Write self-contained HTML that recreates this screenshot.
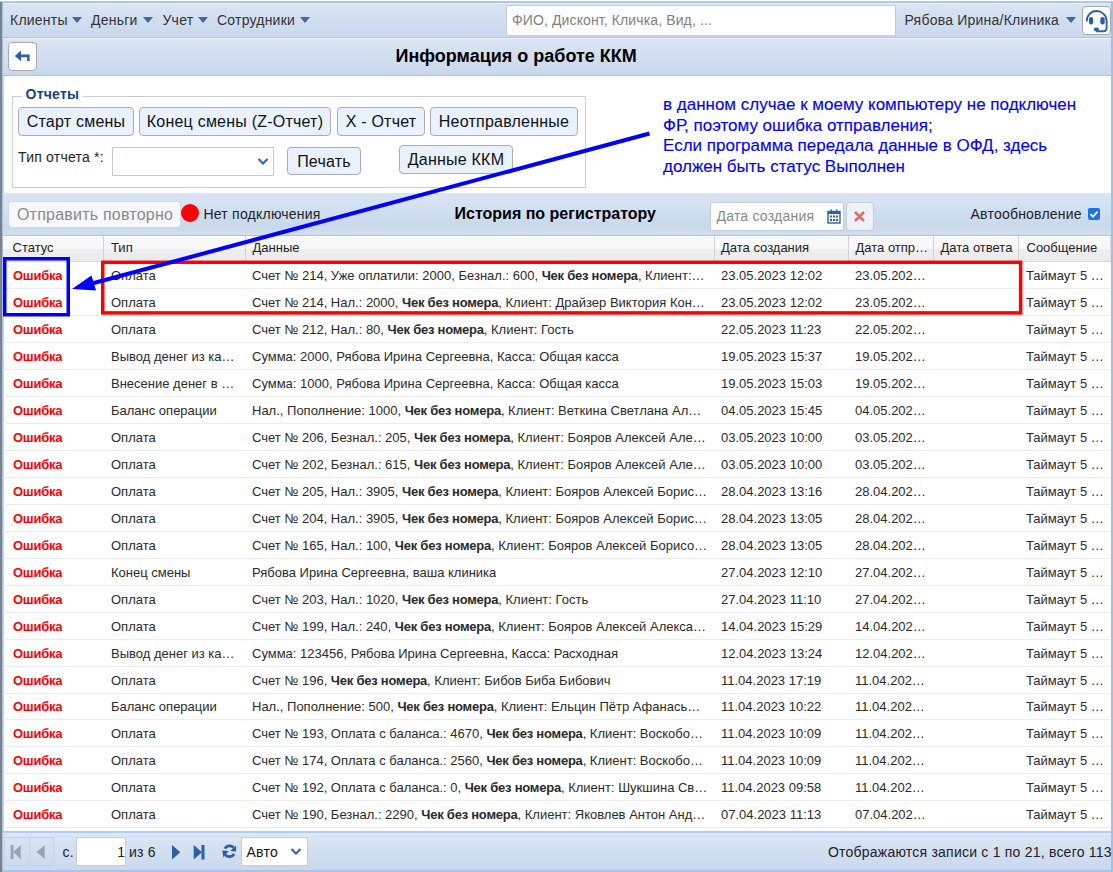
<!DOCTYPE html>
<html><head><meta charset="utf-8">
<style>
html,body{margin:0;padding:0;}
body{width:1113px;height:872px;position:relative;overflow:hidden;background:#fff;font-family:"Liberation Sans",sans-serif;color:#000;}
.a{position:absolute;white-space:nowrap;}
.bar{position:absolute;left:3px;right:2px;background:linear-gradient(#ebf1f9 0,#ebf1f9 1px,#dae5f3 1.5px,#c8d8ec 100%);}
.btn{position:absolute;box-sizing:border-box;letter-spacing:0.22px;border:1px solid #a9adb3;border-radius:4px;background:#e8f1fc;font-size:16px;text-align:center;color:#111;}
.tri{position:absolute;width:0;height:0;border-left:5.5px solid transparent;border-right:5.5px solid transparent;border-top:6px solid #3a68a8;}
.hd{position:absolute;top:235px;height:25px;line-height:25px;font-size:13px;color:#222;}
.row{position:absolute;left:3px;width:1107px;height:26px;border-bottom:1px solid #ececec;font-size:13px;color:#2a2a2a;}
.row span{position:absolute;top:0;line-height:27px;white-space:nowrap;overflow:hidden;}
.st{left:10px;color:#ff0000;font-weight:bold;letter-spacing:-0.25px;}
.row b{letter-spacing:-0.23px;}
.tp{left:108px;}
.dt{left:249px;}
.d1{left:718px;}
.d2{left:852px;}
.ms{left:1023px;}
</style></head><body>
<!-- frame -->
<div class="a" style="left:0;top:2px;width:2px;height:870px;background:#7d8188"></div>
<div class="a" style="left:0;top:1px;width:1113px;height:1px;background:#c4ccd8"></div>
<div class="a" style="left:2px;top:2px;width:1px;height:870px;background:#a0c0ea"></div><div class="a" style="left:3px;top:76px;width:1px;height:796px;background:#c4d8f2"></div>
<div class="a" style="left:1111px;top:2px;width:2px;height:870px;background:#a0c0ea"></div>

<!-- top bar -->
<div class="bar" style="top:2px;height:34px;border-top:1px solid #a6c4ec;border-bottom:1px solid #a6c4ec;"></div>
<div class="a" style="left:10px;top:3px;line-height:34px;font-size:14px;letter-spacing:0.22px;color:#333">Клиенты</div>
<div class="tri" style="left:71.5px;top:17px"></div>
<div class="a" style="left:91px;top:3px;line-height:34px;font-size:14px;letter-spacing:0.22px;color:#333">Деньги</div>
<div class="tri" style="left:143px;top:17px"></div>
<div class="a" style="left:162.5px;top:3px;line-height:34px;font-size:14px;letter-spacing:0.22px;color:#333">Учет</div>
<div class="tri" style="left:197.5px;top:17px"></div>
<div class="a" style="left:217px;top:3px;line-height:34px;font-size:14px;letter-spacing:0.22px;color:#333">Сотрудники</div>
<div class="tri" style="left:299.5px;top:17px"></div>

<div class="a" style="left:506px;top:5px;width:390px;height:31px;box-sizing:border-box;border:1px solid #c5cdd8;background:#fff;"></div>
<div class="a" style="left:512px;top:4.5px;line-height:30px;font-size:14px;letter-spacing:0.12px;color:#808080">ФИО, Дисконт, Кличка, Вид, ...</div>
<div class="a" style="left:904.5px;top:3px;line-height:34px;font-size:14px;letter-spacing:0.22px;color:#333">Рябова Ирина/Клиника</div>
<div class="tri" style="left:1065.5px;top:17px"></div>
<div class="a" style="left:1082px;top:6px;width:29px;height:29px;box-sizing:border-box;border:1px solid #a9a9a9;border-radius:4px;background:#fff;"></div>
<svg class="a" style="left:1082px;top:6px" width="29" height="29" viewBox="0 0 29 29">
 <path d="M4.7 15.5 A9.9 9.9 0 0 1 24.6 14.5 V22 Q24.6 25.2 21.4 25.2 H14" fill="none" stroke="#2f60a4" stroke-width="1.9"/>
 <rect x="7" y="11" width="4.2" height="7.4" rx="2" fill="#2f60a4"/>
 <rect x="18.3" y="11" width="4.4" height="7.4" rx="2" fill="#2f60a4"/>
 <rect x="12" y="21.6" width="5" height="3.7" rx="1.85" fill="#2f60a4"/>
</svg>

<!-- title bar -->
<div class="bar" style="top:37px;height:37px;border-top:1px solid #a6c4ec;border-bottom:1px solid #a6c4ec;"></div>
<div class="a" style="left:8px;top:42px;width:28.5px;height:28.5px;box-sizing:border-box;border:1px solid #a9a9a9;border-radius:4px;background:#fff;"></div>
<svg class="a" style="left:8px;top:42px" width="29" height="29" viewBox="0 0 29 29">
 <path d="M6.8 13.9 L13 8.6 V12.4 H21.6 V19.1 H19.1 V15.3 H13 V19.2 Z" fill="#2f60a4"/>
</svg>
<div class="a" style="left:395.5px;top:38px;line-height:37px;font-size:18px;font-weight:bold;color:#000">Информация о работе ККМ</div>

<!-- fieldset -->
<div class="a" style="left:12px;top:96px;width:574px;height:92px;box-sizing:border-box;border:1px solid #c9ced8;"></div>
<div class="a" style="left:22px;top:84px;padding:0 3.5px;background:#fff;line-height:20px;font-size:14px;letter-spacing:0.25px;font-weight:bold;color:#15428b">Отчеты</div>
<div class="btn" style="left:18px;top:107px;width:116px;height:29px;line-height:27px">Старт смены</div>
<div class="btn" style="left:139px;top:107px;width:192px;height:29px;line-height:27px">Конец смены (Z-Отчет)</div>
<div class="btn" style="left:337px;top:107px;width:88px;height:29px;line-height:27px">X - Отчет</div>
<div class="btn" style="left:430px;top:107px;width:148px;height:29px;line-height:27px">Неотправленные</div>
<div class="a" style="left:18px;top:147px;line-height:20px;font-size:14px;letter-spacing:0.22px;color:#222">Тип отчета *:</div>
<div class="a" style="left:112px;top:147px;width:162px;height:29px;box-sizing:border-box;border:1px solid #c5cad2;background:#fff"></div>
<svg class="a" style="left:257px;top:156px" width="12" height="10" viewBox="0 0 12 10"><path d="M1.5 3 L6 7.5 L10.5 3" fill="none" stroke="#2f60a4" stroke-width="2"/></svg>
<div class="btn" style="left:287px;top:146.5px;width:74px;height:28.5px;line-height:27px">Печать</div>
<div class="btn" style="left:399px;top:144.5px;width:114px;height:29px;line-height:27px">Данные ККМ</div>

<!-- annotation text -->
<div class="a" style="left:663px;top:95px;line-height:20.5px;font-size:17px;letter-spacing:0px;color:#0000ff;-webkit-text-stroke:0.12px #0000ff">в данном случае к моему компьютеру не подключен<br>ФР, поэтому ошибка отправления;<br>Если программа передала данные в ОФД, здесь<br>должен быть статус Выполнен</div>

<!-- toolbar 2 -->
<div class="bar" style="top:193px;height:42px;border-bottom:1px solid #a6c4ec;background:linear-gradient(#dae6f4 0,#c8d9ec 78%,#d0dfef 100%)"></div>
<div class="btn" style="left:8px;top:200.5px;width:172.5px;height:27.5px;line-height:26px;background:#f6f8fb;border-color:#d3d9e1;border-radius:4px;color:#8a8a8a;padding-left:1.5px">Отправить повторно</div>
<div class="a" style="left:181.3px;top:203.7px;width:18px;height:18px;border-radius:50%;background:#ff0000"></div>
<div class="a" style="left:203.5px;top:204px;line-height:20px;font-size:14px;letter-spacing:0.22px;color:#222">Нет подключения</div>
<div class="a" style="left:454.5px;top:193px;line-height:42px;font-size:16px;font-weight:bold;color:#000">История по регистратору</div>
<div class="a" style="left:710px;top:202px;width:134px;height:28.5px;box-sizing:border-box;border:1px solid #c5cdd8;background:#fff"></div>
<div class="a" style="left:716.5px;top:202px;line-height:28px;font-size:14px;letter-spacing:0.22px;color:#888">Дата создания</div>
<svg class="a" style="left:826.5px;top:208.5px" width="14" height="15" viewBox="0 0 14 15">
 <rect x="1" y="2.5" width="12" height="11.5" fill="none" stroke="#2f60a4" stroke-width="1.4"/>
 <rect x="1" y="2.5" width="12" height="2.5" fill="#2f60a4"/>
 <rect x="3.5" y="0.5" width="1.5" height="3" fill="#2f60a4"/><rect x="9" y="0.5" width="1.5" height="3" fill="#2f60a4"/>
 <g fill="#2f60a4"><rect x="3" y="6.5" width="2" height="2"/><rect x="6" y="6.5" width="2" height="2"/><rect x="9" y="6.5" width="2" height="2"/><rect x="3" y="10" width="2" height="2"/><rect x="6" y="10" width="2" height="2"/><rect x="9" y="10" width="2" height="2"/></g>
</svg>
<div class="a" style="left:845.5px;top:202px;width:28px;height:28.5px;box-sizing:border-box;border:1px solid #c5cdd8;border-radius:4px;background:#edf2f9"></div>
<svg class="a" style="left:853px;top:209.5px" width="13" height="13" viewBox="0 0 13 13"><path d="M2 2 L11 11 M11 2 L2 11" stroke="#e06a6e" stroke-width="2.5"/></svg>
<div class="a" style="left:970.5px;top:204px;line-height:20px;font-size:14px;letter-spacing:0.22px;color:#222">Автообновление</div>
<div class="a" style="left:1088px;top:208px;width:12px;height:12px;border-radius:2px;background:#1a73e8"></div>
<svg class="a" style="left:1088px;top:208px" width="12" height="12" viewBox="0 0 12 12"><path d="M2.5 6.2 L5 8.6 L9.6 3.6" fill="none" stroke="#fff" stroke-width="1.8"/></svg>

<!-- grid header -->
<div class="a" style="left:3px;top:236px;width:1107px;height:25px;background:linear-gradient(#fdfdfd 0,#f8f8f8 1px,#f8f8f8 13px,#efeff1 13px,#eaeaec 25px);border-bottom:1px solid #d9d9d9;border-right:1px solid #e0e0e0"></div>
<div class="a" style="left:103px;top:236px;width:1px;height:25px;background:#d3d3d3"></div>
<div class="a" style="left:245px;top:236px;width:1px;height:25px;background:#d3d3d3"></div>
<div class="a" style="left:714px;top:236px;width:1px;height:25px;background:#d3d3d3"></div>
<div class="a" style="left:848px;top:236px;width:1px;height:25px;background:#d3d3d3"></div>
<div class="a" style="left:933px;top:236px;width:1px;height:25px;background:#d3d3d3"></div>
<div class="a" style="left:1018px;top:236px;width:1px;height:25px;background:#d3d3d3"></div>
<div class="hd" style="left:12.5px">Статус</div>
<div class="hd" style="left:111px">Тип</div>
<div class="hd" style="left:252.5px">Данные</div>
<div class="hd" style="left:721px">Дата создания</div>
<div class="hd" style="left:855.5px">Дата отпр…</div>
<div class="hd" style="left:940.5px">Дата ответа</div>
<div class="hd" style="left:1026.5px">Сообщение</div>

<div id="rows">
<div class="row" style="top:262px"><span class="st">Ошибка</span><span class="tp">Оплата</span><span class="dt">Счет № 214, Уже оплатили: 2000, Безнал.: 600, <b>Чек без номера</b>, Клиент:…</span><span class="d1">23.05.2023 12:02</span><span class="d2">23.05.202…</span><span class="ms">Таймаут 5 …</span></div>
<div class="row" style="top:289px"><span class="st">Ошибка</span><span class="tp">Оплата</span><span class="dt">Счет № 214, Нал.: 2000, <b>Чек без номера</b>, Клиент: Драйзер Виктория Кон…</span><span class="d1">23.05.2023 12:02</span><span class="d2">23.05.202…</span><span class="ms">Таймаут 5 …</span></div>
<div class="row" style="top:316px"><span class="st">Ошибка</span><span class="tp">Оплата</span><span class="dt">Счет № 212, Нал.: 80, <b>Чек без номера</b>, Клиент: Гость</span><span class="d1">22.05.2023 11:23</span><span class="d2">22.05.202…</span><span class="ms">Таймаут 5 …</span></div>
<div class="row" style="top:343px"><span class="st">Ошибка</span><span class="tp">Вывод денег из ка…</span><span class="dt">Сумма: 2000, Рябова Ирина Сергеевна, Касса: Общая касса</span><span class="d1">19.05.2023 15:37</span><span class="d2">19.05.202…</span><span class="ms">Таймаут 5 …</span></div>
<div class="row" style="top:370px"><span class="st">Ошибка</span><span class="tp">Внесение денег в …</span><span class="dt">Сумма: 1000, Рябова Ирина Сергеевна, Касса: Общая касса</span><span class="d1">19.05.2023 15:03</span><span class="d2">19.05.202…</span><span class="ms">Таймаут 5 …</span></div>
<div class="row" style="top:397px"><span class="st">Ошибка</span><span class="tp">Баланс операции</span><span class="dt">Нал., Пополнение: 1000, <b>Чек без номера</b>, Клиент: Веткина Светлана Ал…</span><span class="d1">04.05.2023 15:45</span><span class="d2">04.05.202…</span><span class="ms">Таймаут 5 …</span></div>
<div class="row" style="top:424px"><span class="st">Ошибка</span><span class="tp">Оплата</span><span class="dt">Счет № 206, Безнал.: 205, <b>Чек без номера</b>, Клиент: Бояров Алексей Але…</span><span class="d1">03.05.2023 10:00</span><span class="d2">03.05.202…</span><span class="ms">Таймаут 5 …</span></div>
<div class="row" style="top:451px"><span class="st">Ошибка</span><span class="tp">Оплата</span><span class="dt">Счет № 202, Безнал.: 615, <b>Чек без номера</b>, Клиент: Бояров Алексей Але…</span><span class="d1">03.05.2023 10:00</span><span class="d2">03.05.202…</span><span class="ms">Таймаут 5 …</span></div>
<div class="row" style="top:478px"><span class="st">Ошибка</span><span class="tp">Оплата</span><span class="dt">Счет № 205, Нал.: 3905, <b>Чек без номера</b>, Клиент: Бояров Алексей Борис…</span><span class="d1">28.04.2023 13:16</span><span class="d2">28.04.202…</span><span class="ms">Таймаут 5 …</span></div>
<div class="row" style="top:505px"><span class="st">Ошибка</span><span class="tp">Оплата</span><span class="dt">Счет № 204, Нал.: 3905, <b>Чек без номера</b>, Клиент: Бояров Алексей Борис…</span><span class="d1">28.04.2023 13:05</span><span class="d2">28.04.202…</span><span class="ms">Таймаут 5 …</span></div>
<div class="row" style="top:532px"><span class="st">Ошибка</span><span class="tp">Оплата</span><span class="dt">Счет № 165, Нал.: 100, <b>Чек без номера</b>, Клиент: Бояров Алексей Борисо…</span><span class="d1">28.04.2023 13:05</span><span class="d2">28.04.202…</span><span class="ms">Таймаут 5 …</span></div>
<div class="row" style="top:559px"><span class="st">Ошибка</span><span class="tp">Конец смены</span><span class="dt">Рябова Ирина Сергеевна, ваша клиника</span><span class="d1">27.04.2023 12:10</span><span class="d2">27.04.202…</span><span class="ms">Таймаут 5 …</span></div>
<div class="row" style="top:586px"><span class="st">Ошибка</span><span class="tp">Оплата</span><span class="dt">Счет № 203, Нал.: 1020, <b>Чек без номера</b>, Клиент: Гость</span><span class="d1">27.04.2023 11:10</span><span class="d2">27.04.202…</span><span class="ms">Таймаут 5 …</span></div>
<div class="row" style="top:613px"><span class="st">Ошибка</span><span class="tp">Оплата</span><span class="dt">Счет № 199, Нал.: 240, <b>Чек без номера</b>, Клиент: Бояров Алексей Алекса…</span><span class="d1">14.04.2023 15:29</span><span class="d2">14.04.202…</span><span class="ms">Таймаут 5 …</span></div>
<div class="row" style="top:640px"><span class="st">Ошибка</span><span class="tp">Вывод денег из ка…</span><span class="dt">Сумма: 123456, Рябова Ирина Сергеевна, Касса: Расходная</span><span class="d1">12.04.2023 13:24</span><span class="d2">12.04.202…</span><span class="ms">Таймаут 5 …</span></div>
<div class="row" style="top:667px"><span class="st">Ошибка</span><span class="tp">Оплата</span><span class="dt">Счет № 196, <b>Чек без номера</b>, Клиент: Бибов Биба Бибович</span><span class="d1">11.04.2023 17:19</span><span class="d2">11.04.202…</span><span class="ms">Таймаут 5 …</span></div>
<div class="row" style="top:693px"><span class="st">Ошибка</span><span class="tp">Баланс операции</span><span class="dt">Нал., Пополнение: 500, <b>Чек без номера</b>, Клиент: Ельцин Пётр Афанась…</span><span class="d1">11.04.2023 10:22</span><span class="d2">11.04.202…</span><span class="ms">Таймаут 5 …</span></div>
<div class="row" style="top:720px"><span class="st">Ошибка</span><span class="tp">Оплата</span><span class="dt">Счет № 193, Оплата с баланса.: 4670, <b>Чек без номера</b>, Клиент: Воскобо…</span><span class="d1">11.04.2023 10:09</span><span class="d2">11.04.202…</span><span class="ms">Таймаут 5 …</span></div>
<div class="row" style="top:747px"><span class="st">Ошибка</span><span class="tp">Оплата</span><span class="dt">Счет № 174, Оплата с баланса.: 2560, <b>Чек без номера</b>, Клиент: Воскобо…</span><span class="d1">11.04.2023 10:09</span><span class="d2">11.04.202…</span><span class="ms">Таймаут 5 …</span></div>
<div class="row" style="top:774px"><span class="st">Ошибка</span><span class="tp">Оплата</span><span class="dt">Счет № 192, Оплата с баланса.: 0, <b>Чек без номера</b>, Клиент: Шукшина Св…</span><span class="d1">11.04.2023 09:58</span><span class="d2">11.04.202…</span><span class="ms">Таймаут 5 …</span></div>
<div class="row" style="top:801px"><span class="st">Ошибка</span><span class="tp">Оплата</span><span class="dt">Счет № 190, Безнал.: 2290, <b>Чек без номера</b>, Клиент: Яковлев Антон Анд…</span><span class="d1">07.04.2023 11:13</span><span class="d2">07.04.202…</span><span class="ms">Таймаут 5 …</span></div>
</div>

<!-- footer -->
<div class="a" style="left:3px;top:831px;width:1108px;height:1.5px;background:#b3cdee"></div>
<div class="a" style="left:3px;top:832.5px;width:1108px;height:37.5px;background:linear-gradient(#e4ecf7,#dae5f3 2px,#c9d9ee)"></div>
<div class="a" style="left:2px;top:870px;width:1111px;height:2px;background:#a6c4ec"></div>
<div class="a" style="left:4px;top:837px;width:50px;height:28.5px;box-sizing:border-box;border:1px solid #cdd2d8;"></div>
<div class="a" style="left:28.5px;top:837px;width:1px;height:28.5px;background:#cdd2d8"></div>
<svg class="a" style="left:4px;top:837px" width="50" height="29" viewBox="0 0 50 29">
 <rect x="6.7" y="8" width="2.8" height="14.2" fill="#9ba4ae"/>
 <path d="M16.8 8 V22.2 L9.4 15.1 Z" fill="#9ba4ae"/>
 <path d="M40.7 8 V22 L32.7 15 Z" fill="#9ba4ae"/>
</svg>
<div class="a" style="left:62.5px;top:838px;line-height:29px;font-size:14px;letter-spacing:0.22px;color:#222">с.</div>
<div class="a" style="left:75.5px;top:837px;width:50.5px;height:28.5px;box-sizing:border-box;border:1px solid #c5cdd8;background:#fff"></div>
<div class="a" style="left:75.5px;top:838px;width:49.5px;text-align:right;line-height:29px;font-size:14px;color:#222">1</div>
<div class="a" style="left:129px;top:838px;line-height:29px;font-size:14px;letter-spacing:0.22px;color:#222">из 6</div>
<svg class="a" style="left:170px;top:844px" width="40" height="16" viewBox="0 0 40 16">
 <path d="M2 1 V15.5 L10.3 8.2 Z" fill="#2f60a4"/>
 <path d="M23.7 1 V15.5 L32 8.2 Z" fill="#2f60a4"/>
 <rect x="31.5" y="1" width="3" height="14.5" fill="#2f60a4"/>
</svg>
<svg class="a" style="left:221px;top:844px" width="17" height="15" viewBox="0 0 17 15">
 <path d="M3.82 4.6 A5.4 5.4 0 0 1 12.51 3.69" fill="none" stroke="#2f5c9c" stroke-width="2.7"/>
 <path d="M14.8 1.6 L15.3 7.6 L9.3 7.1 Z" fill="#2f5c9c"/>
 <path d="M13.18 10 A5.4 5.4 0 0 1 4.36 10.77" fill="none" stroke="#2f5c9c" stroke-width="2.7"/>
 <path d="M1.3 6.4 L7.6 6.9 L2.3 13.6 Z" fill="#2f5c9c"/>
</svg>
<div class="a" style="left:241px;top:837px;width:66.5px;height:28.5px;box-sizing:border-box;border:1px solid #c5cdd8;background:#fff"></div>
<div class="a" style="left:246.5px;top:838px;line-height:29px;font-size:14px;letter-spacing:0.22px;color:#111">Авто</div>
<svg class="a" style="left:290px;top:846px" width="12" height="10" viewBox="0 0 12 10"><path d="M1.5 3 L6 7.5 L10.5 3" fill="none" stroke="#2f60a4" stroke-width="2"/></svg>
<div class="a" style="left:828px;top:838px;line-height:29px;font-size:14px;letter-spacing:0.22px;color:#222">Отображаются записи с 1 по 21, всего 113</div>

<!-- annotation overlay -->
<svg class="a" style="left:0;top:0" width="1113" height="872" viewBox="0 0 1113 872">
 <rect x="4.75" y="258.75" width="63.5" height="56" fill="none" stroke="#0000ff" stroke-width="3.5"/>
 <rect x="102.75" y="262.3" width="917.9" height="50.6" fill="none" stroke="#ff0000" stroke-width="3.5"/>
 <line x1="649.5" y1="133.5" x2="92" y2="283.5" stroke="#0000ff" stroke-width="4"/>
 <path d="M72 289 L91.5 275.5 L96 290.5 Z" fill="#0000ff"/>
</svg>
</body></html>
